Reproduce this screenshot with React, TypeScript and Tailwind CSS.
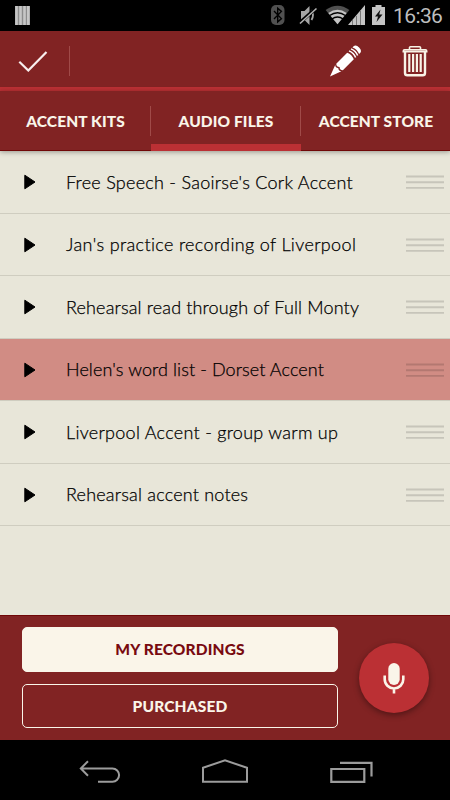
import { useState } from 'react';

type Row = { title: string; tracking: string };

const ROWS: Row[] = [
  { title: "Free Speech - Saoirse's Cork Accent", tracking: 'tracking-[0.26px]' },
  { title: "Jan's practice recording of Liverpool", tracking: 'tracking-[0.35px]' },
  { title: 'Rehearsal read through of Full Monty', tracking: 'tracking-[0.15px]' },
  { title: "Helen's word list - Dorset Accent", tracking: 'tracking-[0.09px]' },
  { title: 'Liverpool Accent - group warm up', tracking: 'tracking-[0.28px]' },
  { title: 'Rehearsal accent notes', tracking: 'tracking-[0.2px]' },
];

const TABS = ['ACCENT KITS', 'AUDIO FILES', 'ACCENT STORE'];

function StatusBar() {
  return (
    <div className="flex h-[31px] shrink-0 items-center bg-black pr-[7px] pl-[15px]">
      <svg width="15" height="19" viewBox="0 0 15 19">
        <rect width="15" height="19" fill="#8c8c8c" />
        <path d="M1.5 0v19M5.5 0v19M9.5 0v19M13.3 0v19" stroke="#c6c6c6" strokeWidth="2.6" />
      </svg>
      <svg className="ml-auto" width="120" height="31" viewBox="0 0 120 31">
        {/* Bluetooth */}
        <rect x="1" y="5" width="13.5" height="20" rx="5" fill="#505050" />
        <path d="M4 11l7.4 7.6-3.7 3.4V8.2l3.7 3.2L4 19" fill="none" stroke="#000" strokeWidth="1.4" />
        {/* Muted */}
        <path d="M31 11h3.5l5-5v19l-5-5H31z" fill="#a6a6a6" />
        <path d="M41.5 10q3 5 0 10" fill="none" stroke="#a6a6a6" strokeWidth="1.8" />
        <path d="M30.5 22L46.5 8" stroke="#000" strokeWidth="3.6" />
        <path d="M30 23.5L46.5 8.5" stroke="#b4b4b4" strokeWidth="1.6" />
        {/* Wifi */}
        <path d="M67.5 24.3L55.6 10q12-8.5 23.8 0z" fill="#505050" />
        <path d="M67.5 24.3L58.3 13q9.2-6.5 18.4 0z" fill="#c4c4c4" />
        <path d="M59.6 15.5q8-5.5 15.8 0M61.8 19q5.7-4 11.4 0" fill="none" stroke="#000" strokeWidth="1.3" />
        {/* Signal */}
        <path d="M78 25L95 5v20z" fill="#c4c4c4" />
        <path d="M82.5 20v5M86.5 16v9M90.5 11v14" stroke="#777" strokeWidth="1" />
        {/* Battery */}
        <path d="M102 7h3.5V5h6v2h3.5v18h-13z" fill="#c4c4c4" />
        <path d="M110.5 9.5l-5.5 7h3l-1.5 5.5 6-7.5h-3.3z" fill="#111" />
      </svg>
      <span className="ml-[3px] w-[50px] pt-px font-[Roboto,sans-serif] text-[21px] leading-[30px] tracking-[-0.6px] whitespace-nowrap text-[#bebebe]">
        16:36
      </span>
    </div>
  );
}

function Toolbar() {
  return (
    <div className="flex h-[60px] shrink-0 items-center border-b-4 border-[#bb3034] bg-[#812323] pt-[5px] pb-px pl-[18px]">
      <button type="button" aria-label="Done">
        <svg width="30" height="22" viewBox="0 0 30 22" fill="none">
          <path d="M1.3 11.8l9 8.7L28.5 2" stroke="#f8eeee" strokeWidth="2.2" />
        </svg>
      </button>
      <div className="ml-[21px] h-[30px] w-px bg-[#a04a48]" />
      <button type="button" aria-label="Edit" className="ml-[259px]">
        <svg width="32" height="32" viewBox="0 0 32 32">
          <g transform="translate(1 31.5) rotate(45) scale(.9 .98)" fill="#fff">
            <path d="M0 0L-4.9-12q2.4 2 4.9 0q2.5 2 4.9 0z" />
            <path d="M-5.2-13.8V-29.6q5.2-2.2 10.4 0V-13.8q-2.6 2.2-5.2 0q-2.6 2.2-5.2 0z" />
            <path d="M-5.2-32.2q5.2-2.2 10.4 0M-5.2-35.1q5.2-2.2 10.4 0" fill="none" stroke="#fff" strokeWidth="1.6" />
            <path d="M-5.2-37.2v-1.2q0-3.6 5.2-3.6t5.2 3.6v1.2q-5.2-2.2-10.4 0z" />
          </g>
        </svg>
      </button>
      <button type="button" aria-label="Delete" className="ml-[41px]">
        <svg width="26" height="32" viewBox="0 0 26 32" fill="none" stroke="#f8f3e6">
          <path d="M7.5 4.5V2.6q0-.8 1-.8h9q1 0 1 .8v1.9" strokeWidth="1.6" />
          <path d="M1.3 6.6V6q0-1.2 1.2-1.2h21q1.2 0 1.2 1.2v.6z" strokeWidth="1.6" />
          <path d="M3 7v21q0 2.3 2.3 2.3h15.4q2.3 0 2.3-2.3V7" strokeWidth="2.4" />
          <path d="M7.3 9v18M11.1 9v18M14.9 9v18M18.7 9v18" strokeWidth="2.2" />
        </svg>
      </button>
    </div>
  );
}

export default function App() {
  const [tab, setTab] = useState(1);
  const [selected, setSelected] = useState(3);

  return (
    <div className="flex h-[800px] w-[450px] flex-col overflow-hidden bg-[#e8e6d9] font-[Lato,sans-serif]">
      <StatusBar />
      <Toolbar />

      {/* Tabs */}
      <div className="z-10 grid h-[60px] shrink-0 grid-cols-[151px_150px_149px] bg-[#812323] shadow-[0_1px_5px_rgba(0,0,0,0.35)]">
        {TABS.map((label, i) => (
          <button
            key={label}
            type="button"
            onClick={() => setTab(i)}
            className={`flex items-center border-b text-[15.5px] font-black tracking-[0.1px] whitespace-nowrap text-[#faf5e9] ${
              i === tab ? 'border-[#bb3034] shadow-[inset_0_-6px_0_#bb3034]' : 'border-[#700808]'
            }`}
          >
            <span className="flex-1 pt-[3px] pl-px text-center">{label}</span>
            {i < 2 && <span className="h-[30px] w-px bg-[#a04a48]" />}
          </button>
        ))}
      </div>

      {/* Recordings */}
      <div className="flex-1">
        {ROWS.map((row, i) => (
          <div
            key={row.title}
            onClick={() => setSelected(i)}
            className={`flex h-[62.5px] items-center border-b-[1.5px] border-[#cfcdc0] pt-px pr-1.5 pl-6 ${
              i === selected ? 'bg-[#d18c84]' : ''
            }`}
          >
            <svg width="12" height="16" viewBox="0 0 12 16">
              <path d="M.8 1.2L11 8L.8 14.8z" fill="#000" stroke="#000" strokeLinejoin="round" />
            </svg>
            <span
              className={`ml-[30px] text-[18px] font-light whitespace-nowrap text-black [-webkit-text-stroke:0.25px_#000] ${row.tracking}`}
            >
              {row.title}
            </span>
            <svg className="ml-auto" width="38" height="14" viewBox="0 0 38 14">
              <path d="M0 1.5h38M0 7.2h38M0 12.9h38" stroke="#000" strokeOpacity=".14" strokeWidth="1.9" />
            </svg>
          </div>
        ))}
      </div>

      {/* Source filter and record button */}
      <div className="flex h-[125px] shrink-0 items-center border-t border-[#700808] bg-[#812323] pb-px pl-[22px]">
        <div className="flex w-[316px] flex-col gap-3 text-[15.5px] font-black tracking-[0.15px]">
          <button type="button" className="h-[44.5px] rounded-[5px] border border-[#faf5e9] bg-[#faf5e9] pt-px text-[#780a10]">
            MY RECORDINGS
          </button>
          <button type="button" className="h-[44.5px] rounded-[5px] border-[1.5px] border-[#faf5e9] pt-px text-[#faf5e9]">
            PURCHASED
          </button>
        </div>
        <button
          type="button"
          aria-label="Record"
          className="ml-[21px] flex size-[70px] items-center justify-center rounded-full bg-[#bb3034] shadow-[0_2px_6px_rgba(0,0,0,0.4)]"
        >
          <svg width="22" height="32" viewBox="0 0 22 32">
            <rect x="5.3" y="1" width="11.4" height="22" rx="5.7" fill="#faf5e9" />
            <path d="M1.7 13.5v3.7a9.3 9.3 0 0 0 18.6 0v-3.7M11 26.5v5" fill="none" stroke="#faf5e9" strokeWidth="2.6" />
          </svg>
        </button>
      </div>

      {/* System navigation */}
      <div className="flex h-[60px] shrink-0 items-center bg-black pt-[3px] pl-[79px]">
        <svg width="42" height="26" viewBox="0 0 42 26" fill="none" stroke="#9c9c9c" strokeWidth="2">
          <path d="M9 2.2L1.8 9.5L9 16.8M2 9.5h31.5a6.6 6.6 0 0 1 0 13.2H19" />
        </svg>
        <svg className="ml-[80px]" width="48" height="26" viewBox="0 0 48 26" fill="none" stroke="#9c9c9c" strokeWidth="2">
          <path d="M2 22.8V8.8L24 1.3l22 7.5v14z" />
        </svg>
        <svg className="ml-[81px]" width="44" height="26" viewBox="0 0 44 26" fill="none" stroke="#9c9c9c" strokeWidth="2.2">
          <path d="M1.3 10h33v12.8h-33zM10 3.8h31.5v13.7" />
        </svg>
      </div>
    </div>
  );
}
